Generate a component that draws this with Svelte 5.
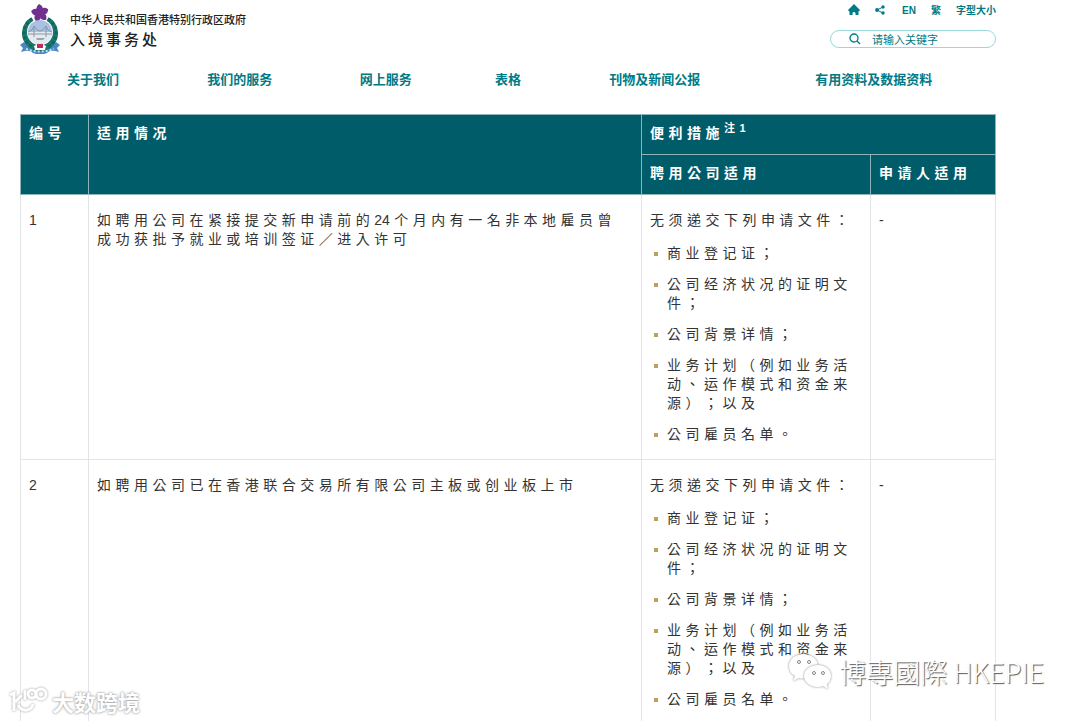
<script>
    let keyword = ''

    const nav = ['关于我们', '我们的服务', '网上服务', '表格', '刊物及新闻公报', '有用资料及数据资料']

    const documents = [
        '商业登记证；',
        '公司经济状况的证明文件；',
        '公司背景详情；',
        '业务计划（例如业务活动、运作模式和资金来源）；以及',
        '公司雇员名单。'
    ]

    const rows = [
        { no: 1, situation: '如聘用公司在紧接提交新申请前的24个月内有一名非本地雇员曾成功获批予就业或培训签证／进入许可' },
        { no: 2, situation: '如聘用公司已在香港联合交易所有限公司主板或创业板上市' }
    ]

    // digits stay together, only the characters around them are spaced
    function splitDigits(text) {
        return text.split(/(\d+)/)
    }
</script>

<div class="page">
    <header>
        <div class="top">
            <a class="brand" href="#home">
                <svg class="crest" viewBox="0 0 40 50" aria-hidden="true">
                    <path d="M4 38 L0 41 L3 44 L1 48 Q10 45 13 49 Q20 52 27 49 Q30 45 39 48 L37 44 L40 41 L36 38 Q20 47 4 38z" fill="#4a86c8" />
                    <path d="M13 16 A15 15 0 1 0 27 16" fill="none" stroke="#1b7a6d" stroke-width="6" />
                    <path d="M12 15 A16 16 0 1 0 28 15" fill="none" stroke="#11665d" stroke-width="3" stroke-dasharray="3 2" />
                    <circle cx="20" cy="28" r="13" fill="#fff" />
                    <circle cx="20" cy="28" r="12" fill="#a9c1e2" />
                    <path d="M8 28h24a12 12 0 0 1-24 0z" fill="#e4ebf0" />
                    <path d="M8 30h24M14 22v11M26 22v11M8 28q5-1 6-6q6 10 12 0q1 5 6 6" fill="none" stroke="#8a98aa" stroke-width="1" />
                    <path d="M16 34h9l-2 2h-6z" fill="#9aa7a8" />
                    <path d="M14 42q6-4 12 0l-1 4H15z" fill="#fff" />
                    <path d="M17 40h6v4h-6z" fill="#c2295b" />
                    <path d="M6 45q14 5 28 0" fill="none" stroke="#c5dcf3" stroke-width="2" stroke-dasharray="2 2" />
                    <g fill="#71308f">
                        <path d="M20 9q-7-4-1-9q7 3 1 9z" />
                        <path d="M20 9q-7-4-1-9q7 3 1 9z" transform="rotate(72 20 9)" />
                        <path d="M20 9q-7-4-1-9q7 3 1 9z" transform="rotate(144 20 9)" />
                        <path d="M20 9q-7-4-1-9q7 3 1 9z" transform="rotate(216 20 9)" />
                        <path d="M20 9q-7-4-1-9q7 3 1 9z" transform="rotate(288 20 9)" />
                        <circle cx="20" cy="9" r="3" />
                    </g>
                </svg>
                <span class="names">
                    <span class="gov">中华人民共和国香港特别行政区政府</span>
                    <span class="dept">入境事务处</span>
                </span>
            </a>

            <div class="tools">
                <div class="links">
                    <a href="#home" aria-label="主页">
                        <svg width="12" height="12" viewBox="0 0 12 12"><path d="M6 0 L12 6 L11 7.500 L10.500 7 V11 H7.500 V9 Q6 7 4.500 9 V11 H1.500 V7 L1 7.500 L0 6z" fill="currentColor" /></svg>
                    </a>
                    <a href="#share" aria-label="分享">
                        <svg width="12" height="10" viewBox="0 0 12 10">
                            <path d="M8 2 L2 5 L8 8" fill="none" stroke="currentColor" />
                            <circle cx="8" cy="2" r="1.700" fill="currentColor" />
                            <circle cx="2" cy="5" r="1.900" fill="currentColor" />
                            <circle cx="8" cy="8" r="1.700" fill="currentColor" />
                        </svg>
                    </a>
                    <a href="#en">EN</a>
                    <a href="#tc">繁</a>
                    <a href="#size">字型大小</a>
                </div>
                <form class="search" on:submit|preventDefault>
                    <button aria-label="搜寻">
                        <svg width="12" height="12" viewBox="0 0 12 12" fill="none" stroke="currentColor" stroke-width="1.300">
                            <circle cx="5" cy="5" r="4" />
                            <path d="M8 8 L11 11" />
                        </svg>
                    </button>
                    <input type="text" aria-label="关键字" placeholder="请输入关键字" bind:value={keyword}>
                </form>
            </div>
        </div>

        <nav>
            {#each nav as item}
                <a href="#{item}">{item}</a>
            {/each}
        </nav>
    </header>

    <table>
        <colgroup>
            <col class="col-no">
            <col>
            <col class="col-company">
            <col class="col-applicant">
        </colgroup>
        <thead>
            <tr>
                <th rowspan="2">编号</th>
                <th rowspan="2">适用情况</th>
                <th colspan="2">便利措施<sup>注1</sup></th>
            </tr>
            <tr>
                <th>聘用公司适用</th>
                <th>申请人适用</th>
            </tr>
        </thead>
        <tbody>
            {#each rows as row}
                <tr>
                    <td>{row.no}</td>
                    <td class="situation">{#each splitDigits(row.situation) as part, i}{#if i % 2}<span class="digits">{part}</span>{:else}{part}{/if}{/each}</td>
                    <td>
                        <p>无须递交下列申请文件：</p>
                        <ul>
                            {#each documents as doc}
                                <li>{doc}</li>
                            {/each}
                        </ul>
                    </td>
                    <td>-</td>
                </tr>
            {/each}
        </tbody>
    </table>

    <div class="mark mark-left">
        <svg width="40" height="28" viewBox="0 0 40 28" fill="none" stroke="#fff" stroke-width="3">
            <path d="M1 8 L5 6 V24 M13 8 L6 15 M9 18 Q12 24 18 23 Q23 22 24 17" />
            <path d="M16 3 V13" />
            <circle cx="23" cy="7" r="4" />
            <circle cx="32" cy="7" r="5" />
        </svg>
        <span>大数跨境</span>
    </div>

    <div class="mark mark-right">
        <svg width="46" height="38" viewBox="0 0 46 38" fill="#fff">
            <path d="M17 1C8 1 2 6 2 13q0 7 6 10l-2 5l6-3q4 1 8 0q9-2 11-9q1-13-14-15z" />
            <path d="M31 12c-8 0-14 5-14 11s6 11 14 11q3 0 5-1l5 3l-1-5q4-3 4-8c0-6-5-11-13-11z" />
            <g fill="#fff" stroke="#888" stroke-width="1">
                <circle cx="12" cy="9" r="1.500" />
                <circle cx="22" cy="9" r="1.500" />
                <circle cx="27" cy="20" r="1.500" />
                <circle cx="36" cy="20" r="1.500" />
            </g>
        </svg>
        <span>博專國際 HKEPIE</span>
    </div>
</div>

<style>
    :global(body) {
        background: #fff;
    }
    .page {
        position: relative;
        box-sizing: border-box;
        height: 100vh;
        overflow: hidden;
        padding: 0 84px 0 20px;
        color: #333;
        font-family: "Liberation Sans", "Noto Sans CJK TC", sans-serif;
        font-size: 14px;
        line-height: 19px;
    }
    a {
        color: inherit;
        text-decoration: none;
    }

    header {
        color: #007a85;
        font-family: "Liberation Sans", "Noto Sans CJK SC", sans-serif;
    }
    .top {
        display: flex;
        justify-content: space-between;
        height: 60px;
    }
    .brand {
        display: flex;
        gap: 10px;
        padding-top: 4px;
        color: #222;
    }
    .crest {
        width: 40px;
        height: 50px;
    }
    .names {
        display: flex;
        flex-direction: column;
        padding-top: 7px;
        font-weight: 500;
    }
    .gov {
        font-size: 11px;
        line-height: 19px;
    }
    .dept {
        font-size: 15px;
        line-height: 20px;
        letter-spacing: 3px;
    }
    .tools {
        width: 166px;
    }
    .links {
        display: flex;
        align-items: center;
        justify-content: flex-end;
        gap: 15px;
        height: 20px;
        font-size: 10px;
        font-weight: bold;
    }
    .links svg {
        display: block;
    }
    .search {
        display: flex;
        align-items: center;
        gap: 11px;
        box-sizing: border-box;
        height: 18px;
        margin-top: 10px;
        padding: 0 18px;
        border: 1px solid #9bd6da;
        border-radius: 9px;
    }
    .search button {
        display: flex;
        padding: 0;
        border: 0;
        background: none;
        color: inherit;
    }
    .search input {
        flex: 1;
        min-width: 0;
        padding: 0;
        border: 0;
        outline: 0;
        background: none;
        color: inherit;
        font: 11px/16px "Noto Sans CJK SC", sans-serif;
    }
    .search input::placeholder {
        color: #007a85;
        opacity: 1;
    }
    nav {
        display: grid;
        grid-template-columns: 146fr 147fr 145fr 99fr 194fr 244fr;
        height: 54px;
        font-size: 13px;
        font-weight: bold;
        line-height: 39px;
        text-align: center;
    }

    table {
        width: 100%;
        table-layout: fixed;
        border-collapse: collapse;
    }
    .col-no {
        width: 68px;
    }
    .col-company {
        width: 229px;
    }
    .col-applicant {
        width: 125px;
    }
    th, td {
        border: 1px solid #e2e4e6;
        text-align: left;
        vertical-align: top;
        letter-spacing: 0.32em;
        text-spacing-trim: space-all;
    }
    th {
        padding: 9px 0 11px 8px;
        border-color: #8fb5ba;
        background: #005c69;
        color: #fff;
    }
    sup {
        font-size: 11px;
        line-height: 0;
    }
    td {
        padding: 16px 8px 15px;
    }
    .situation {
        padding-right: 16px;
        line-height: 19px;
    }
    .digits {
        margin-right: 0.32em;
        letter-spacing: 0;
    }
    p {
        margin: 0 0 14px;
    }
    ul {
        display: flex;
        flex-direction: column;
        gap: 12px;
        margin: 0;
        padding: 0 0 0 17px;
        list-style: none;
    }
    li {
        position: relative;
    }
    li::before {
        content: "";
        position: absolute;
        top: 8px;
        left: -13px;
        width: 4px;
        height: 4px;
        background: #b9a160;
    }

    .mark {
        position: absolute;
        display: flex;
        align-items: center;
        color: #fff;
        white-space: nowrap;
    }
    .mark-left {
        bottom: 5px;
        left: 9px;
        gap: 3px;
        font-family: "Noto Sans CJK SC", sans-serif;
        font-size: 22px;
        font-weight: bold;
        line-height: 30px;
        text-shadow: 0 0 2px #999, 0 0 3px #bbb;
    }
    .mark-left svg {
        filter: drop-shadow(0 0 1px #999);
    }
    .mark-right {
        right: 36px;
        bottom: 30px;
        gap: 6px;
        font-family: "Noto Sans CJK TC", sans-serif;
        font-size: 27px;
        font-weight: 300;
        line-height: 38px;
        text-shadow: 1px 1px 1px #555;
    }
    .mark-right path {
        filter: drop-shadow(0 0 1px #888);
    }
</style>
